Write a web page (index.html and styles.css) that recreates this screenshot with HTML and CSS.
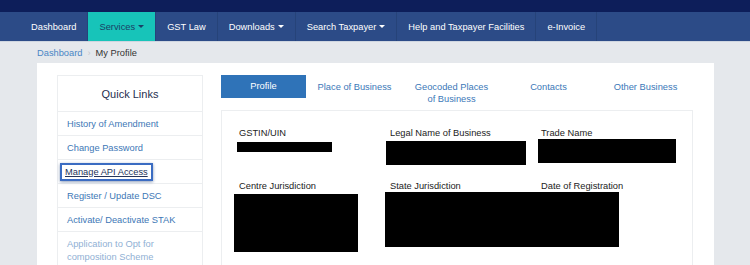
FILE: index.html
```html
<!DOCTYPE html>
<html lang="en">
<head>
    <meta charset="UTF-8">
    <meta name="viewport" content="width=device-width, initial-scale=1.0">
    <title>My Profile</title>
    <link rel="stylesheet" href="styles.css">
</head>
<body>
    <div class="topbar"></div>
    <nav class="menu">
        <a href="#">Dashboard</a>
        <a href="#" class="ativo">Services <span class="seta"></span></a>
        <a href="#">GST Law</a>
        <a href="#">Downloads <span class="seta"></span></a>
        <a href="#">Search Taxpayer <span class="seta"></span></a>
        <a href="#">Help and Taxpayer Facilities</a>
        <a href="#">e-Invoice</a>
    </nav>
    <div class="breadcrumb">
        <a href="#">Dashboard</a>
        <span class="sep">&rsaquo;</span>
        <span>My Profile</span>
    </div>
    <main class="painel">
        <aside class="links">
            <div class="titulo">Quick Links</div>
            <ul>
                <li><a href="#">History of Amendment</a></li>
                <li><a href="#">Change Password</a></li>
                <li><a href="#" class="destaque">Manage API Access</a></li>
                <li><a href="#">Register / Update DSC</a></li>
                <li><a href="#">Activate/ Deactivate STAK</a></li>
                <li><a href="#" class="apagado">Application to Opt for composition Scheme</a></li>
            </ul>
        </aside>
        <section class="perfil">
            <div class="abas">
                <a href="#" class="aba ativa">Profile</a>
                <a href="#" class="aba">Place of Business</a>
                <a href="#" class="aba">Geocoded Places<br>of Business</a>
                <a href="#" class="aba">Contacts</a>
                <a href="#" class="aba">Other Business</a>
            </div>
            <div class="dados">
                <div class="campo">
                    <p>GSTIN/UIN</p>
                    <div class="oculto gstin"></div>
                </div>
                <div class="campo">
                    <p>Legal Name of Business</p>
                    <div class="oculto legal"></div>
                </div>
                <div class="campo">
                    <p>Trade Name</p>
                    <div class="oculto trade"></div>
                </div>
                <div class="campo">
                    <p>Centre Jurisdiction</p>
                    <div class="oculto centro"></div>
                </div>
                <div class="campo">
                    <p>State Jurisdiction</p>
                    <div class="oculto estado"></div>
                </div>
                <div class="campo">
                    <p>Date of Registration</p>
                </div>
            </div>
        </section>
    </main>
</body>
</html>
```

FILE: styles.css
```css
body {
    margin: 0;
    height: 265px;
    overflow: hidden;
    background-color: #e5e8ec;
    font-family: "Liberation Sans", Arial, sans-serif;
    font-size: 9.3px;
    color: #222;
}
a {
    text-decoration: none;
}
.topbar {
    height: 12px;
    background-color: #0d1e5a;
}
.menu {
    display: flex;
    height: 29px;
    padding-left: 20px;
    background-color: #2c4b87;
    border-bottom: 1px solid #cfd6e0;
}
.menu a {
    display: flex;
    align-items: center;
    gap: 3px;
    padding: 0 11px;
    color: #fff;
    border-right: 1px solid #264379;
}
.menu a.ativo {
    background-color: #17c4b9;
    color: #1b3f66;
}
.seta {
    border-left: 3px solid transparent;
    border-right: 3px solid transparent;
    border-top: 3px solid currentColor;
}
.breadcrumb {
    display: flex;
    align-items: center;
    gap: 5px;
    height: 21px;
    padding-left: 37px;
    color: #333;
}
.breadcrumb a {
    color: #4a86c5;
}
.breadcrumb .sep {
    color: #c5c9cf;
}
.painel {
    display: flex;
    gap: 18px;
    width: 636px;
    margin: 0 36px 0 37px;
    padding: 12px 21px 0 20px;
    height: 300px;
    background-color: #fff;
}
.links {
    flex-shrink: 0;
    width: 144px;
    height: 300px;
    border: 1px solid #eceef0;
}
.links .titulo {
    height: 35px;
    display: grid;
    place-items: center;
    font-size: 11px;
    color: #1f2f4f;
    border-bottom: 1px solid #eceef0;
}
.links ul {
    margin: 0;
    padding: 0;
    list-style: none;
}
.links li {
    height: 23px;
    display: flex;
    align-items: center;
    padding-left: 9px;
    border-bottom: 1px solid #eceef0;
}
.links a {
    color: #3d77b6;
}
.links a.destaque {
    margin-left: -7px;
    padding: 2px 3px;
    color: #25355a;
    text-decoration: underline;
    border: 2px solid #3b6cc2;
    box-shadow: 0 1px 3px #8a9bb8;
}
.links li:last-child {
    height: auto;
    padding-top: 6px;
    border: none;
    align-items: flex-start;
}
.links a.apagado {
    color: #90b0d4;
    line-height: 12.5px;
    width: 120px;
}
.perfil {
    flex: 1;
    min-width: 0;
}
.abas {
    display: grid;
    grid-template-columns: 85px repeat(4, 97px);
    height: 35px;
}
.aba {
    text-align: center;
    color: #3b78b8;
    line-height: 12px;
    padding-top: 6px;
    white-space: nowrap;
}
.aba.ativa {
    height: 23px;
    padding: 0;
    line-height: 23px;
    background-color: #2f73b8;
    color: #fff;
}
.dados {
    display: grid;
    grid-template-columns: repeat(3, 151px);
    grid-template-rows: 53px auto;
    height: 200px;
    padding: 16px 0 0 17px;
    border: 1px solid #eceef0;
}
.campo p {
    margin: 0;
    line-height: 12px;
}
.oculto {
    background-color: #000;
}
.gstin {
    width: 95px;
    height: 10px;
    margin: 3px 0 0 -2px;
}
.legal {
    width: 140px;
    height: 24px;
    margin: 2px 0 0 -4px;
}
.trade {
    width: 138px;
    height: 24px;
    margin: 0 0 0 -3px;
}
.centro {
    width: 124px;
    height: 58px;
    margin: 2px 0 0 -5px;
}
.estado {
    width: 234px;
    height: 55px;
    margin: 0 0 0 -5px;
}
```
